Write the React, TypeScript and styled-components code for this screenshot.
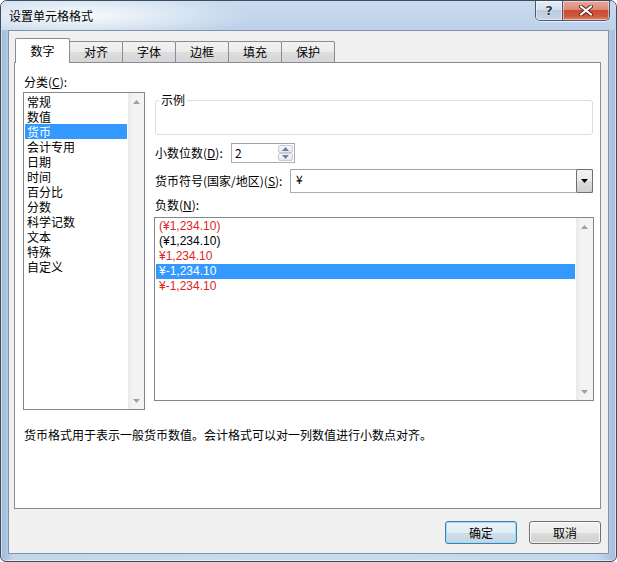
import styled, { createGlobalStyle } from 'styled-components';

const GlobalStyle = createGlobalStyle`
  html, body {
    margin: 0;
    padding: 0;
    background: #ffffff;
  }
  body {
    font-family: "Noto Sans CJK SC", "Noto Sans", sans-serif;
    font-size: 12px;
    color: #000;
  }
`;

const FONT = `"Noto Sans CJK SC", "Noto Sans", sans-serif`;
const NUM_FONT = `"Liberation Sans", "Noto Sans CJK SC", sans-serif`;

const Window = styled.div`
  width: 617px;
  height: 562px;
  box-sizing: border-box;
  border: 1px solid #3d4d60;
  border-radius: 7px 7px 6px 6px;
  background: linear-gradient(90deg, #9fb8d6 0%, #c2d6ec 2%, #c9dbef 50%, #c3d8ee 97%, #a4bddb 100%);
  box-shadow: inset 0 0 0 1px rgba(255, 255, 255, 0.55);
  display: flex;
  flex-direction: column;
  overflow: hidden;
`;

const TitleBar = styled.div`
  height: 29px;
  display: flex;
  align-items: flex-start;
  padding: 0 6px 0 8px;
  background:
    radial-gradient(ellipse 170px 24px at 80px 15px, rgba(255, 255, 255, 0.9), rgba(255, 255, 255, 0) 100%),
    linear-gradient(180deg, #c9dbee 0%, #bcd1e9 100%);
`;

const Title = styled.div`
  flex: 1;
  line-height: 29px;
  font-size: 12px;
  color: #000;
`;

const CaptionGroup = styled.div`
  display: flex;
  height: 19px;
  border: 1px solid #4a5b70;
  border-top: none;
  border-radius: 0 0 5px 5px;
  overflow: hidden;
  box-shadow: 0 1px 0 rgba(255, 255, 255, 0.6);
`;

const CaptionButton = styled.div<{ $variant: 'help' | 'close' }>`
  width: ${(p) => (p.$variant === 'close' ? 46 : 26)}px;
  height: 19px;
  display: flex;
  align-items: center;
  justify-content: center;
  border-left: ${(p) => (p.$variant === 'close' ? '1px solid #4a5b70' : 'none')};
  background: ${(p) =>
    p.$variant === 'close'
      ? 'linear-gradient(180deg, #e9a99b 0%, #dc8a77 45%, #c84b32 50%, #d0593e 80%, #e0876c 100%)'
      : 'linear-gradient(180deg, #e7eef6 0%, #d3dfec 45%, #bccbdd 50%, #c6d5e6 100%)'};
  box-shadow: inset 0 0 0 1px rgba(255, 255, 255, 0.45);
  color: #2f3f55;
  font-family: "DejaVu Sans", sans-serif;
  font-size: 13px;
  font-weight: bold;
  text-shadow: 0 0 2px #ffffff, 0 0 1px #ffffff;
`;

const Client = styled.div`
  margin: 0 7px 7px 7px;
  height: 524px;
  box-sizing: border-box;
  border: 1px solid #8393a7;
  background: #f0f0f0;
  padding: 7px 7px 9px 5px;
  display: flex;
  flex-direction: column;
`;

const TabStrip = styled.div`
  display: flex;
  align-items: flex-end;
  height: 24px;
  padding-left: 1px;
  position: relative;
  z-index: 1;
`;

const Tab = styled.div<{ $active?: boolean }>`
  box-sizing: border-box;
  width: ${(p) => (p.$active ? 55 : 54)}px;
  height: ${(p) => (p.$active ? 25 : 21)}px;
  margin-bottom: ${(p) => (p.$active ? -1 : 0)}px;
  margin-right: -1px;
  border: 1px solid #898c95;
  border-bottom: none;
  border-radius: 2px 2px 0 0;
  background: ${(p) =>
    p.$active ? '#ffffff' : 'linear-gradient(180deg, #f2f2f2 0%, #ebebeb 50%, #dddddd 51%, #d6d6d6 100%)'};
  position: relative;
  z-index: ${(p) => (p.$active ? 2 : 1)};
  display: flex;
  align-items: center;
  justify-content: center;
  font-size: 12px;
  line-height: 16px;
`;

const Panel = styled.div`
  height: 447px;
  box-sizing: border-box;
  border: 1px solid #898c95;
  background: #ffffff;
  padding: 11px 6px 0 8px;
`;

const Columns = styled.div`
  display: flex;
  gap: 9px;
  align-items: flex-start;
`;

const LeftColumn = styled.div`
  width: 122px;
  display: flex;
  flex-direction: column;
`;

const RightColumn = styled.div`
  width: 440px;
  padding-top: 18px;
  display: flex;
  flex-direction: column;
`;

const Label = styled.div<{ $width?: number; $top?: number }>`
  line-height: 16px;
  white-space: nowrap;
  padding-left: 1px;
  margin-top: ${(p) => p.$top ?? 0}px;
  width: ${(p) => (p.$width ? `${p.$width}px` : 'auto')};
  flex-shrink: 0;
`;

const ListBox = styled.div<{ $width: number; $height: number; $top: number }>`
  width: ${(p) => p.$width}px;
  height: ${(p) => p.$height}px;
  margin-top: ${(p) => p.$top}px;
  box-sizing: border-box;
  border: 1px solid #828790;
  background: #ffffff;
  display: flex;
`;

const ListItems = styled.div<{ $numeric?: boolean }>`
  flex: 1;
  padding: 1px;
  display: flex;
  flex-direction: column;
  font-family: ${(p) => (p.$numeric ? NUM_FONT : FONT)};
`;

const ListItem = styled.div<{ $selected?: boolean; $color?: string; $indent: number }>`
  height: 15px;
  line-height: 15px;
  padding-left: ${(p) => p.$indent}px;
  white-space: nowrap;
  overflow: hidden;
  background: ${(p) => (p.$selected ? '#3399ff' : 'transparent')};
  color: ${(p) => (p.$selected ? '#ffffff' : p.$color ?? '#000000')};
`;

const ScrollBar = styled.div<{ $width: number }>`
  width: ${(p) => p.$width}px;
  background: linear-gradient(90deg, #e9e9e9 0%, #f3f3f3 30%, #f3f3f3 100%);
  display: flex;
  flex-direction: column;
  justify-content: space-between;
  align-items: center;
`;

const ScrollArrow = styled.div`
  height: 17px;
  width: 100%;
  display: flex;
  align-items: center;
  justify-content: center;
`;

const Sample = styled.fieldset`
  margin: 0 0 0 1px;
  padding: 0;
  width: 438px;
  height: 43px;
  box-sizing: border-box;
  border: 1px solid #d5dfe5;
  border-radius: 3px;
  min-inline-size: 0;
`;

const SampleLegend = styled.legend`
  margin-left: 3px;
  padding: 0 2px;
  line-height: 16px;
  font-size: 12px;
`;

const FieldRow = styled.div<{ $top: number }>`
  display: flex;
  align-items: center;
  margin-top: ${(p) => p.$top}px;
`;

const Spinner = styled.div`
  width: 64px;
  height: 20px;
  box-sizing: border-box;
  border: 1px solid #abadb3;
  border-top-color: #a1a3a9;
  background: #ffffff;
  display: flex;
`;

const FieldValue = styled.div<{ $indent: number }>`
  flex: 1;
  padding-left: ${(p) => p.$indent}px;
  line-height: 18px;
`;

const SpinButtons = styled.div`
  width: 15px;
  display: flex;
  flex-direction: column;
  padding: 1px 1px 1px 0;
`;

const SpinButton = styled.div`
  flex: 1;
  box-sizing: border-box;
  border: 1px solid #c5cbd3;
  border-radius: 2px;
  background: linear-gradient(180deg, #f6f8fa 0%, #e4e9ef 100%);
  display: flex;
  align-items: center;
  justify-content: center;
`;

const Combo = styled.div`
  width: 303px;
  height: 24px;
  box-sizing: border-box;
  border: 1px solid #abadb3;
  border-top-color: #a1a3a9;
  background: #ffffff;
  display: flex;
`;

const DropButton = styled.div`
  width: 17px;
  margin: -1px -1px -1px 0;
  box-sizing: border-box;
  border: 1px solid #707070;
  border-radius: 2px;
  background: linear-gradient(180deg, #f2f2f2 0%, #ebebeb 50%, #dddddd 51%, #cfcfcf 100%);
  display: flex;
  align-items: center;
  justify-content: center;
`;

const Description = styled.div`
  margin-top: 17px;
  padding-left: 1px;
  line-height: 16px;
`;

const ButtonRow = styled.div`
  margin-top: 12px;
  display: flex;
  justify-content: flex-end;
  gap: 12px;
`;

const DialogButton = styled.button<{ $default?: boolean }>`
  width: 72px;
  height: 23px;
  box-sizing: border-box;
  padding: 0;
  border: 1px solid ${(p) => (p.$default ? '#3c7fb1' : '#707070')};
  border-radius: 3px;
  background: ${(p) =>
    p.$default
      ? 'linear-gradient(180deg, #eaf3f9 0%, #e1ecf4 50%, #cfdfea 51%, #c4d6e3 100%)'
      : 'linear-gradient(180deg, #f2f2f2 0%, #ebebeb 50%, #dddddd 51%, #cfcfcf 100%)'};
  box-shadow: ${(p) =>
    p.$default ? 'inset 0 0 0 1px #9fdcf5' : 'inset 0 0 0 1px rgba(255, 255, 255, 0.75)'};
  font-family: ${FONT};
  font-size: 12px;
  color: #000;
`;

const Mn = styled.span`
  text-decoration: underline;
`;

const UpTri = ({ color = '#a0a0a0' }: { color?: string }) => (
  <svg width="7" height="4" viewBox="0 0 7 4">
    <path d="M3.5 0 L7 4 L0 4 Z" fill={color} />
  </svg>
);

const DownTri = ({ color = '#a0a0a0' }: { color?: string }) => (
  <svg width="7" height="4" viewBox="0 0 7 4">
    <path d="M0 0 L7 0 L3.5 4 Z" fill={color} />
  </svg>
);

const categories = ['常规', '数值', '货币', '会计专用', '日期', '时间', '百分比', '分数', '科学记数', '文本', '特殊', '自定义'];

const negatives = [
  { text: '(¥1,234.10)', color: '#e02424' },
  { text: '(¥1,234.10)', color: '#000000' },
  { text: '¥1,234.10', color: '#e02424' },
  { text: '¥-1,234.10', color: '#000000', selected: true },
  { text: '¥-1,234.10', color: '#e02424' },
];

const tabs = ['数字', '对齐', '字体', '边框', '填充', '保护'];

export default function App() {
  return (
    <>
      <GlobalStyle />
      <Window>
        <TitleBar>
          <Title>设置单元格格式</Title>
          <CaptionGroup>
            <CaptionButton $variant="help">?</CaptionButton>
            <CaptionButton $variant="close">
              <svg width="14" height="11" viewBox="0 0 14 11">
                <path d="M2 1.5 L12 9.5 M12 1.5 L2 9.5" stroke="#5a2a20" strokeWidth="4" strokeLinecap="round" />
                <path d="M2 1.5 L12 9.5 M12 1.5 L2 9.5" stroke="#ffffff" strokeWidth="2.2" strokeLinecap="round" />
              </svg>
            </CaptionButton>
          </CaptionGroup>
        </TitleBar>
        <Client>
          <TabStrip>
            {tabs.map((t, i) => (
              <Tab key={t} $active={i === 0}>
                {t}
              </Tab>
            ))}
          </TabStrip>
          <Panel>
            <Columns>
              <LeftColumn>
                <Label>
                  分类(<Mn>C</Mn>):
                </Label>
                <ListBox $width={122} $height={318} $top={2}>
                  <ListItems>
                    {categories.map((c) => (
                      <ListItem key={c} $indent={2} $selected={c === '货币'}>
                        {c}
                      </ListItem>
                    ))}
                  </ListItems>
                  <ScrollBar $width={16}>
                    <ScrollArrow>
                      <UpTri />
                    </ScrollArrow>
                    <ScrollArrow>
                      <DownTri />
                    </ScrollArrow>
                  </ScrollBar>
                </ListBox>
              </LeftColumn>
              <RightColumn>
                <Sample>
                  <SampleLegend>示例</SampleLegend>
                </Sample>
                <FieldRow $top={8}>
                  <Label $width={76}>
                    小数位数(<Mn>D</Mn>):
                  </Label>
                  <Spinner>
                    <FieldValue $indent={3}>2</FieldValue>
                    <SpinButtons>
                      <SpinButton>
                        <UpTri color="#6d7f99" />
                      </SpinButton>
                      <SpinButton>
                        <DownTri color="#6d7f99" />
                      </SpinButton>
                    </SpinButtons>
                  </Spinner>
                </FieldRow>
                <FieldRow $top={6}>
                  <Label $width={135}>
                    货币符号(国家/地区)(<Mn>S</Mn>):
                  </Label>
                  <Combo>
                    <FieldValue $indent={5}>¥</FieldValue>
                    <DropButton>
                      <DownTri color="#000000" />
                    </DropButton>
                  </Combo>
                </FieldRow>
                <Label $top={4}>
                  负数(<Mn>N</Mn>):
                </Label>
                <ListBox $width={440} $height={184} $top={4}>
                  <ListItems $numeric>
                    {negatives.map((n, i) => (
                      <ListItem key={i} $indent={3} $color={n.color} $selected={n.selected}>
                        {n.text}
                      </ListItem>
                    ))}
                  </ListItems>
                  <ScrollBar $width={17}>
                    <ScrollArrow>
                      <UpTri />
                    </ScrollArrow>
                    <ScrollArrow>
                      <DownTri />
                    </ScrollArrow>
                  </ScrollBar>
                </ListBox>
              </RightColumn>
            </Columns>
            <Description>货币格式用于表示一般货币数值。会计格式可以对一列数值进行小数点对齐。</Description>
          </Panel>
          <ButtonRow>
            <DialogButton $default>确定</DialogButton>
            <DialogButton>取消</DialogButton>
          </ButtonRow>
        </Client>
      </Window>
    </>
  );
}
